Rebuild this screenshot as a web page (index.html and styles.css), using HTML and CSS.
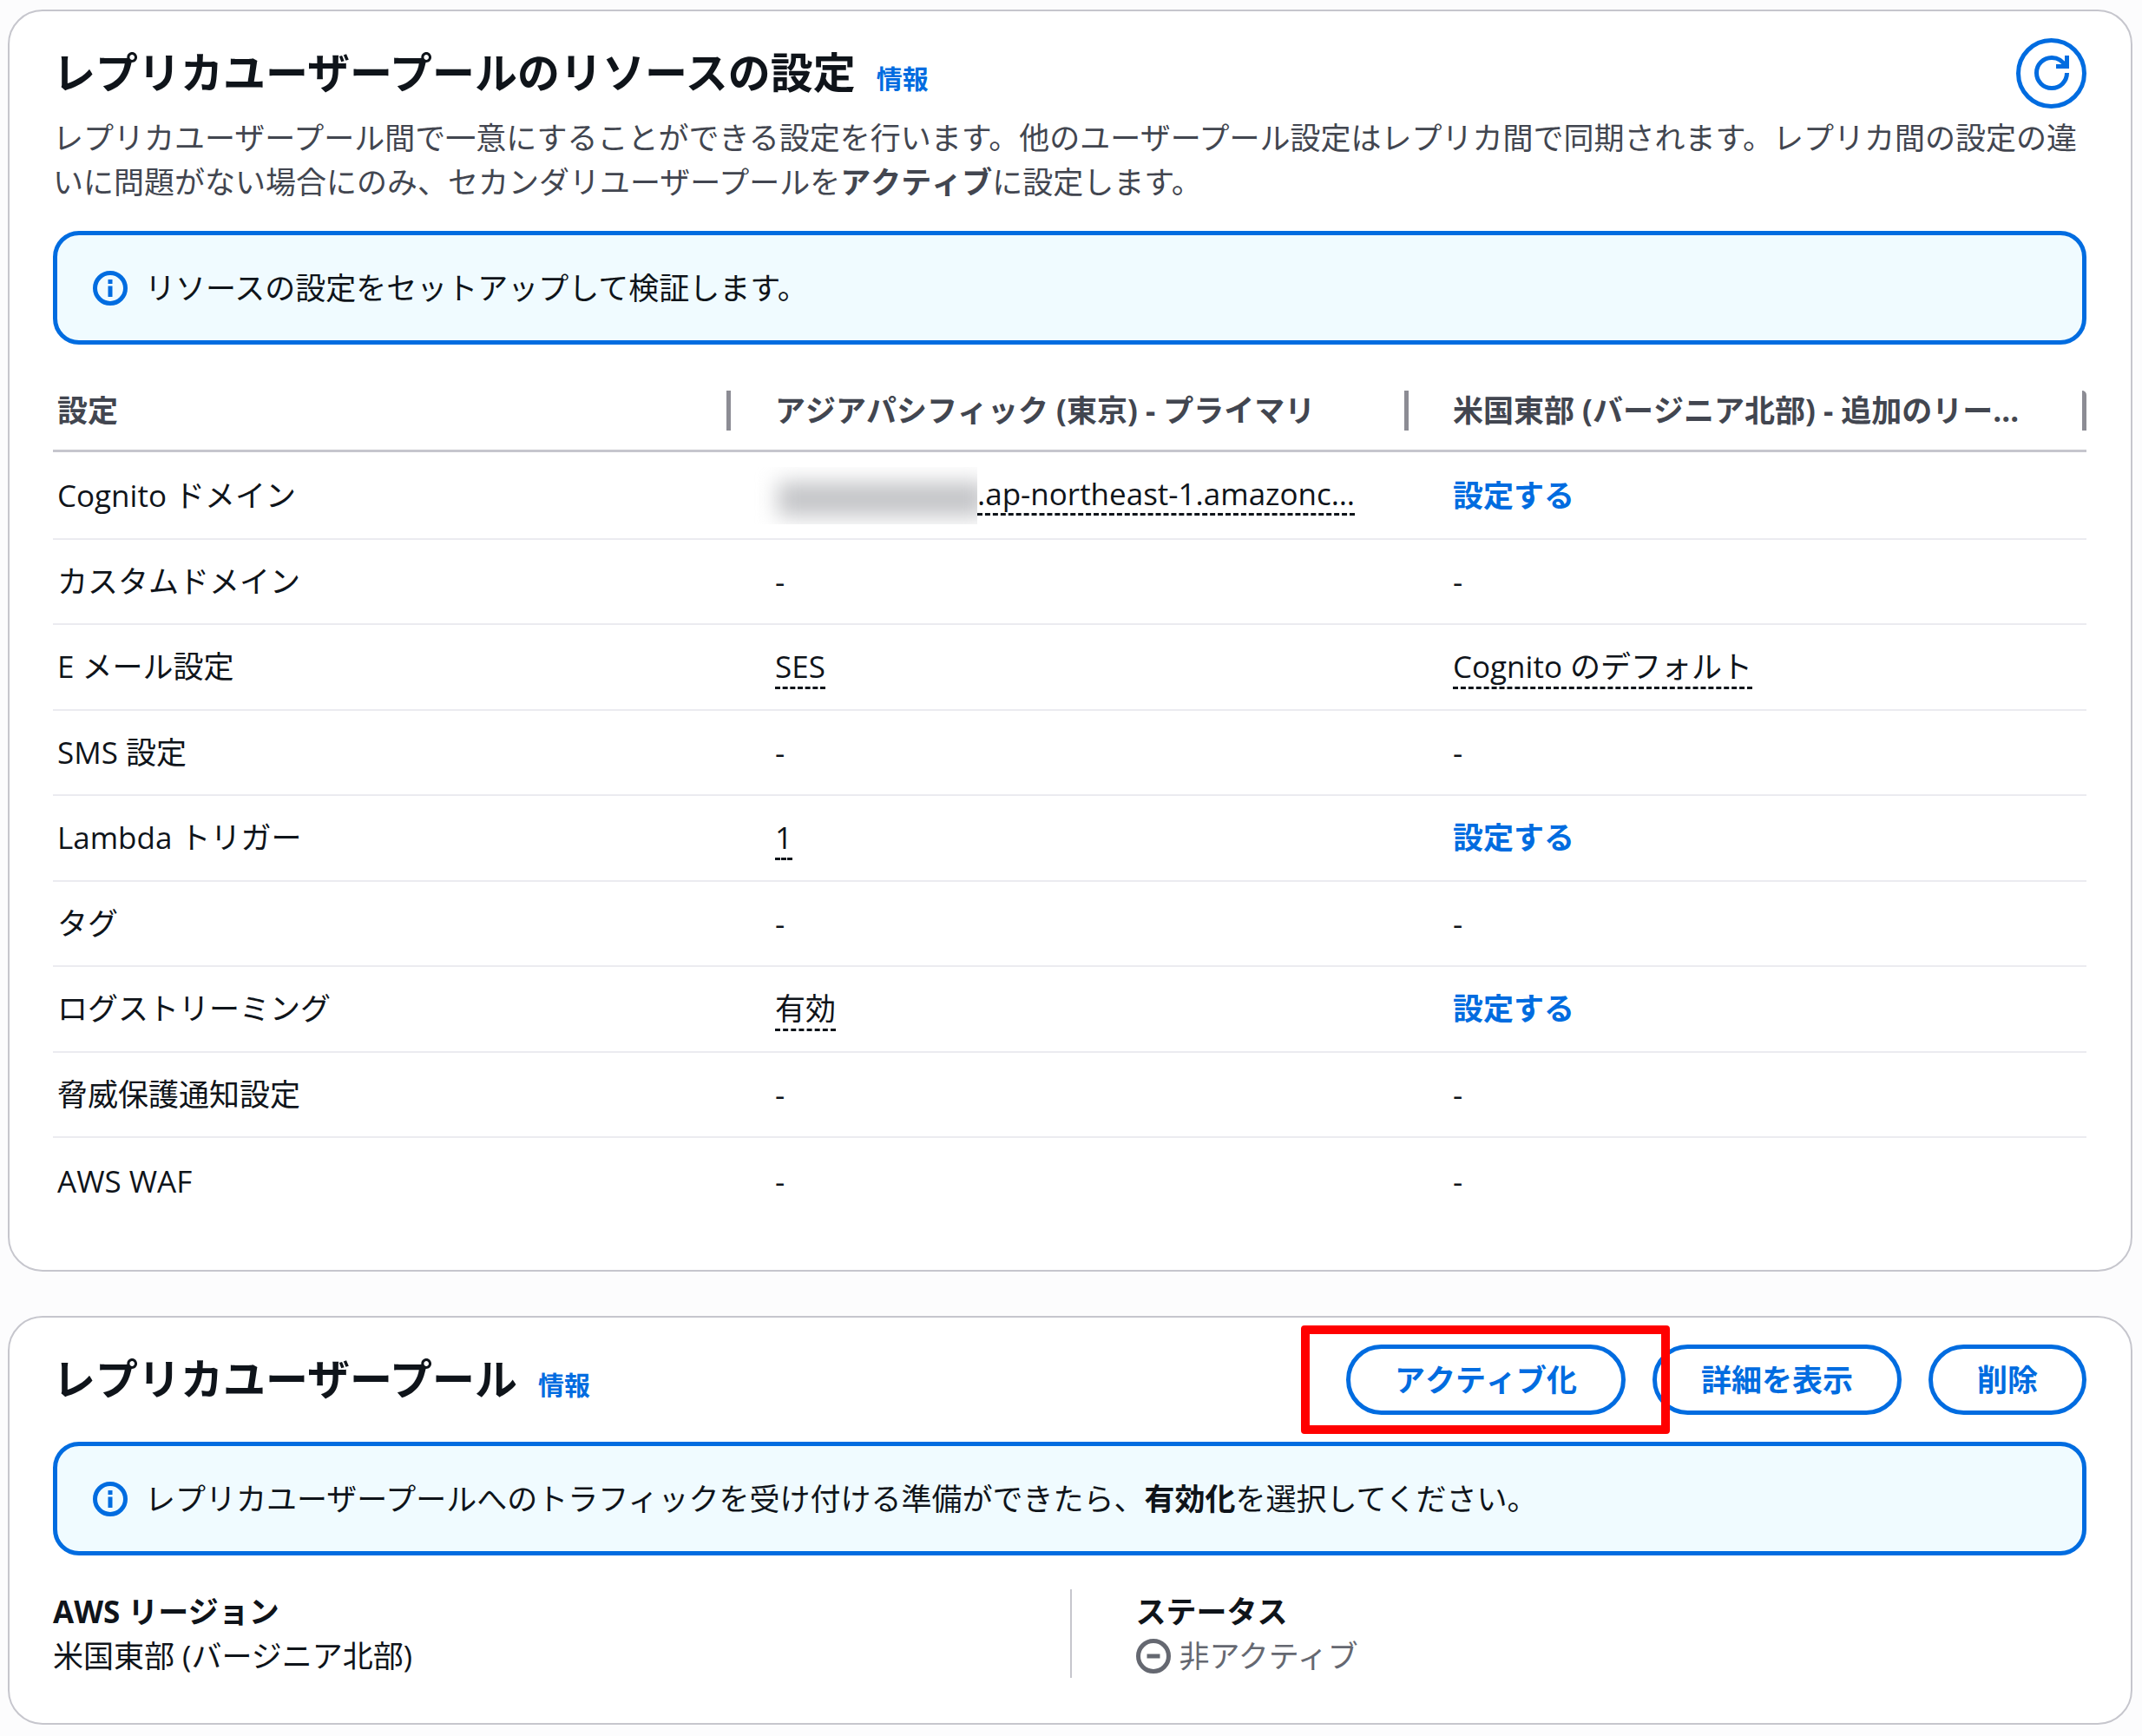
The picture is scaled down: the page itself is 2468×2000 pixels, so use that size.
FILE: index.html
```html
<!DOCTYPE html>
<html lang="ja">
<head>
<meta charset="utf-8">
<meta name="viewport" content="width=device-width, initial-scale=1">
<title>レプリカユーザープール</title>
<link rel="stylesheet" href="styles.css">
</head>
<body>
<main class="page">
  <section class="card">
    <header class="card-header">
      <div class="title-row">
        <h2 class="title">レプリカユーザープールのリソースの設定</h2>
        <a class="info-link" href="#">情報</a>
      </div>
      <button class="button button-icon" type="button" aria-label="更新">
        <svg class="icon" viewBox="0 0 16 16" aria-hidden="true"><path d="M10 5h5V0"/><path d="M15 8a6.957 6.957 0 0 1-7 7 6.957 6.957 0 0 1-7-7 6.957 6.957 0 0 1 7-7 6.87 6.87 0 0 1 6.3 4"/></svg>
      </button>
    </header>
    <p class="description">レプリカユーザープール間で一意にすることができる設定を行います。他のユーザープール設定はレプリカ間で同期されます。レプリカ間の設定の違いに問題がない場合にのみ、セカンダリユーザープールを<b>アクティブ</b>に設定します。</p>
    <div class="alert">
      <svg class="icon" viewBox="0 0 16 16" aria-hidden="true"><circle cx="8" cy="8" r="7"/><path d="M8 12V7M8 6V4"/></svg>
      <p class="alert-text">リソースの設定をセットアップして検証します。</p>
    </div>
    <table class="settings">
      <thead>
        <tr>
          <th scope="col"><span class="head">設定</span></th>
          <th scope="col"><span class="head">アジアパシフィック (東京) - プライマリ</span></th>
          <th scope="col"><span class="head">米国東部 (バージニア北部) - 追加のリー…</span></th>
        </tr>
      </thead>
      <tbody>
        <tr><td>Cognito ドメイン</td><td><span class="domain"><span class="mask"><span class="mask-fill"></span></span><span class="hint">.ap-northeast-1.amazonc…</span></span></td><td><a class="link" href="#">設定する</a></td></tr>
        <tr><td>カスタムドメイン</td><td>-</td><td>-</td></tr>
        <tr><td>E メール設定</td><td><span class="hint">SES</span></td><td><span class="hint">Cognito のデフォルト</span></td></tr>
        <tr><td>SMS 設定</td><td>-</td><td>-</td></tr>
        <tr><td>Lambda トリガー</td><td><span class="hint">1</span></td><td><a class="link" href="#">設定する</a></td></tr>
        <tr><td>タグ</td><td>-</td><td>-</td></tr>
        <tr><td>ログストリーミング</td><td><span class="hint">有効</span></td><td><a class="link" href="#">設定する</a></td></tr>
        <tr><td>脅威保護通知設定</td><td>-</td><td>-</td></tr>
        <tr><td>AWS WAF</td><td>-</td><td>-</td></tr>
      </tbody>
    </table>
  </section>

  <section class="card">
    <header class="card-header">
      <div class="title-row">
        <h2 class="title">レプリカユーザープール</h2>
        <a class="info-link" href="#">情報</a>
      </div>
      <div class="actions">
        <div class="highlight"><button class="button" type="button">アクティブ化</button></div>
        <button class="button" type="button">詳細を表示</button>
        <button class="button" type="button">削除</button>
      </div>
    </header>
    <div class="alert">
      <svg class="icon" viewBox="0 0 16 16" aria-hidden="true"><circle cx="8" cy="8" r="7"/><path d="M8 12V7M8 6V4"/></svg>
      <p class="alert-text">レプリカユーザープールへのトラフィックを受け付ける準備ができたら、<b>有効化</b>を選択してください。</p>
    </div>
    <dl class="details">
      <div class="detail">
        <dt>AWS リージョン</dt>
        <dd>米国東部 (バージニア北部)</dd>
      </div>
      <div class="detail">
        <dt>ステータス</dt>
        <dd class="status"><svg class="icon" viewBox="0 0 16 16" aria-hidden="true"><circle cx="8" cy="8" r="7"/><path d="M11 8H5"/></svg>非アクティブ</dd>
      </div>
    </dl>
  </section>
</main>
</body>
</html>
```
FILE: styles.css
```css
:root {
  --blue: #006ce0;
  --text: #0f141a;
  --muted: #424650;
  --line: #c6c6cd;
}

* {
  box-sizing: border-box;
}

body {
  margin: 0;
  background: #fcfcfd;
  color: var(--text);
  font-family: "Open Sans", "Noto Sans CJK JP", sans-serif;
  font-size: 35px;
  line-height: 51px;
}

h2, p, dl, dd {
  margin: 0;
}

b {
  font-weight: 700;
  font-kerning: none;
}

.page {
  display: flex;
  flex-direction: column;
  gap: 51px;
  padding: 11px 11px 14px 9px;
}

.card {
  padding: 30px 51px 52px 50px;
  border: 2px solid var(--line);
  border-radius: 40px;
  background: #fff;
}

.card-header {
  display: flex;
  align-items: center;
  justify-content: space-between;
  height: 82px;
}

.title-row {
  display: flex;
  align-items: baseline;
  gap: 24px;
}

.title {
  font-size: 49px;
  line-height: 62px;
  font-weight: 700;
}

.info-link {
  color: var(--blue);
  font-size: 30px;
  font-weight: 700;
  text-decoration: none;
}

.description {
  margin: 8px -8px 0 0;
  color: var(--muted);
}

.icon {
  flex: none;
  width: 40px;
  height: 40px;
  fill: none;
  stroke: currentColor;
  stroke-width: 2;
}

.alert {
  display: flex;
  align-items: center;
  gap: 20px;
  margin-top: 31px;
  padding: 35px 41px;
  border: 5px solid var(--blue);
  border-radius: 30px;
  background: #f0fbff;
}

.alert .icon {
  color: var(--blue);
}

.actions {
  display: flex;
  gap: 31px;
}

.button {
  height: 81px;
  padding: 0 51px;
  border: 5px solid var(--blue);
  border-radius: 41px;
  background: #fff;
  color: var(--blue);
  font: inherit;
  font-weight: 700;
  font-kerning: none;
}

.button-icon {
  display: flex;
  align-items: center;
  justify-content: center;
  width: 81px;
  padding: 0;
}

.highlight {
  position: relative;
  display: flex;
}

.highlight::after {
  content: "";
  position: absolute;
  z-index: 1;
  inset: -22px -51px -22px -52px;
  border: 10px solid #f00;
  border-radius: 4px;
  pointer-events: none;
}

.settings {
  width: 100%;
  margin-top: 30px;
  border-collapse: separate;
  border-spacing: 0;
  table-layout: fixed;
}

.settings th {
  height: 94px;
  padding: 0;
  border-bottom: 3px solid var(--line);
  color: var(--muted);
  font-weight: 700;
  font-kerning: none;
  text-align: left;
}

.head {
  display: block;
  height: 46px;
  padding-left: 51px;
  border-right: 5px solid #8c8c94;
  line-height: 46px;
  white-space: nowrap;
}

.settings th:first-child .head,
.settings td:first-child {
  padding-left: 5px;
}

.settings th:last-child .head {
  border-top-right-radius: 5px;
}

.settings td {
  height: 99px;
  padding: 0 0 2px 51px;
  border-bottom: 2px solid #ebebf0;
}

.settings tr:nth-child(even) td {
  height: 98px;
}

.settings tbody tr:first-child td {
  height: 101px;
  padding-bottom: 0;
}

.settings tr:last-child td {
  height: 100px;
  border-bottom: 0;
}

.link {
  color: var(--blue);
  font-weight: 700;
  text-decoration: none;
}

.hint {
  border-bottom: 3px dashed var(--text);
}

.domain {
  display: flex;
  align-items: center;
}

.domain .hint {
  line-height: 44px;
}

.mask {
  width: 260px;
  height: 66px;
  margin-left: -27px;
  overflow: hidden;
}

.mask-fill {
  display: block;
  height: 40px;
  margin: 17px -10px 0 30px;
  background: #c4c5c8;
  filter: blur(12px);
}

.details {
  display: grid;
  grid-template-columns: 1fr 1fr;
  margin-top: 39px;
}

.detail + .detail {
  padding-left: 74px;
  border-left: 2px solid var(--line);
}

.detail dt {
  font-weight: 700;
}

.status {
  display: flex;
  align-items: center;
  gap: 10px;
  color: #656871;
}
```
